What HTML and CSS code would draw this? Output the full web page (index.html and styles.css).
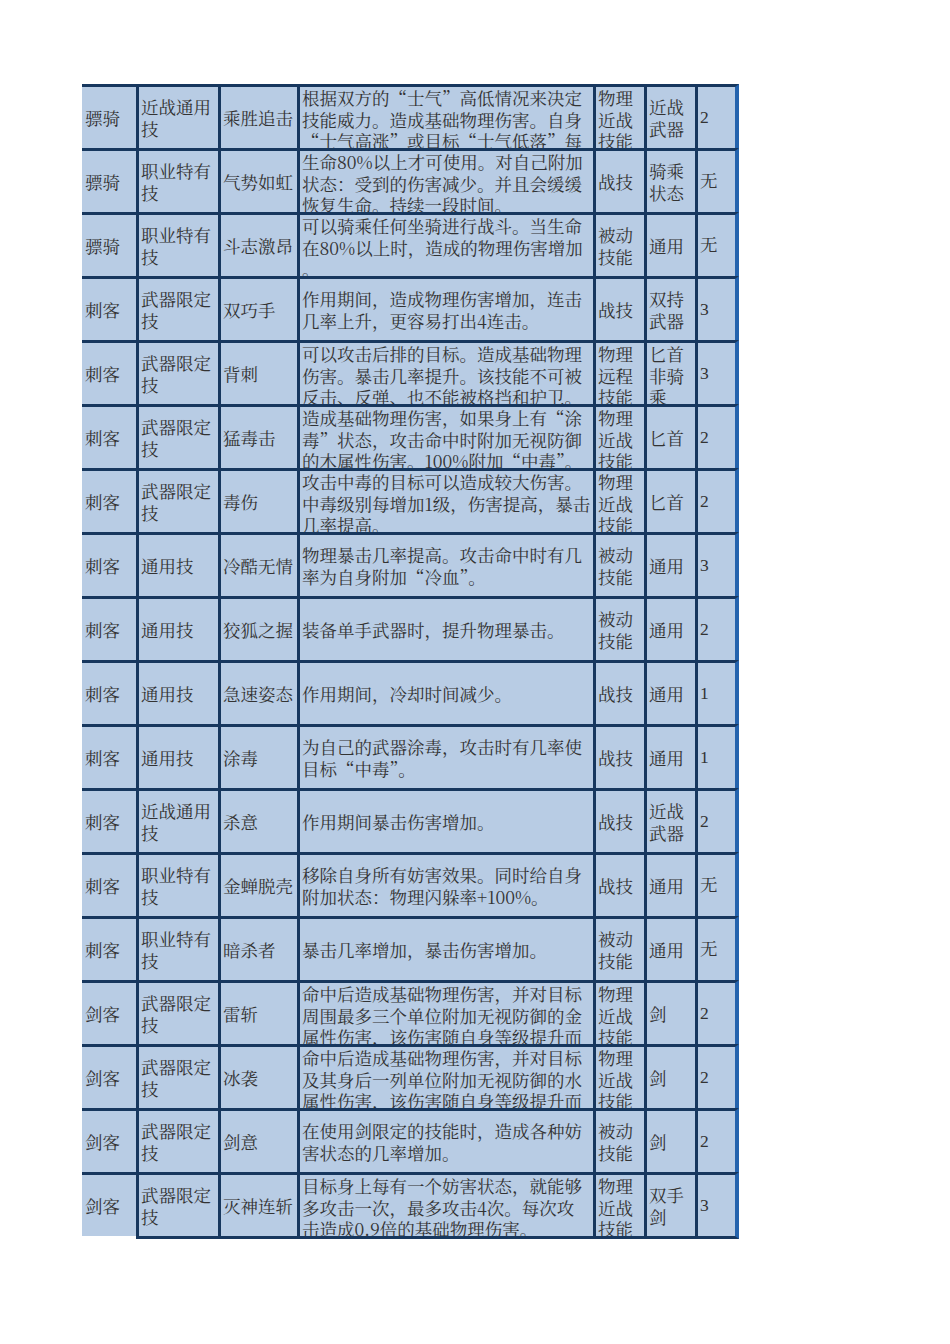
FILE: index.html
```html
<!DOCTYPE html>
<html lang="zh-CN">
<head>
<meta charset="utf-8">
<title>技能表</title>
<link rel="stylesheet" href="styles.css">
</head>
<body>
<div class="page">
  <div class="sheet">
    <div class="cell c1">骠骑</div><div class="cell">近战通用技</div><div class="cell">乘胜追击</div><div class="cell">根据双方的“士气”高低情况来决定技能威力。造成基础物理伤害。自身“士气高涨”或目标“士气低落”每一级，伤害提高。</div><div class="cell">物理近战技能</div><div class="cell">近战武器</div><div class="cell c7">2</div>
    <div class="cell c1">骠骑</div><div class="cell">职业特有技</div><div class="cell">气势如虹</div><div class="cell">生命80%以上才可使用。对自己附加状态：受到的伤害减少。并且会缓缓恢复生命。持续一段时间。</div><div class="cell">战技</div><div class="cell">骑乘状态</div><div class="cell c7">无</div>
    <div class="cell c1">骠骑</div><div class="cell">职业特有技</div><div class="cell">斗志激昂</div><div class="cell">可以骑乘任何坐骑进行战斗。当生命在80%以上时，造成的物理伤害增加。</div><div class="cell">被动技能</div><div class="cell">通用</div><div class="cell c7">无</div>
    <div class="cell c1">刺客</div><div class="cell">武器限定技</div><div class="cell">双巧手</div><div class="cell">作用期间，造成物理伤害增加，连击几率上升，更容易打出4连击。</div><div class="cell">战技</div><div class="cell">双持武器</div><div class="cell c7">3</div>
    <div class="cell c1">刺客</div><div class="cell">武器限定技</div><div class="cell">背刺</div><div class="cell">可以攻击后排的目标。造成基础物理伤害。暴击几率提升。该技能不可被反击、反弹、也不能被格挡和护卫。</div><div class="cell">物理远程技能</div><div class="cell">匕首非骑乘</div><div class="cell c7">3</div>
    <div class="cell c1">刺客</div><div class="cell">武器限定技</div><div class="cell">猛毒击</div><div class="cell">造成基础物理伤害，如果身上有“涂毒”状态，攻击命中时附加无视防御的木属性伤害。100%附加“中毒”。</div><div class="cell">物理近战技能</div><div class="cell">匕首</div><div class="cell c7">2</div>
    <div class="cell c1">刺客</div><div class="cell">武器限定技</div><div class="cell">毒伤</div><div class="cell">攻击中毒的目标可以造成较大伤害。中毒级别每增加1级，伤害提高，暴击几率提高。</div><div class="cell">物理近战技能</div><div class="cell">匕首</div><div class="cell c7">2</div>
    <div class="cell c1">刺客</div><div class="cell">通用技</div><div class="cell">冷酷无情</div><div class="cell">物理暴击几率提高。攻击命中时有几率为自身附加“冷血”。</div><div class="cell">被动技能</div><div class="cell">通用</div><div class="cell c7">3</div>
    <div class="cell c1">刺客</div><div class="cell">通用技</div><div class="cell">狡狐之握</div><div class="cell">装备单手武器时，提升物理暴击。</div><div class="cell">被动技能</div><div class="cell">通用</div><div class="cell c7">2</div>
    <div class="cell c1">刺客</div><div class="cell">通用技</div><div class="cell">急速姿态</div><div class="cell">作用期间，冷却时间减少。</div><div class="cell">战技</div><div class="cell">通用</div><div class="cell c7">1</div>
    <div class="cell c1">刺客</div><div class="cell">通用技</div><div class="cell">涂毒</div><div class="cell">为自己的武器涂毒，攻击时有几率使目标“中毒”。</div><div class="cell">战技</div><div class="cell">通用</div><div class="cell c7">1</div>
    <div class="cell c1">刺客</div><div class="cell">近战通用技</div><div class="cell">杀意</div><div class="cell">作用期间暴击伤害增加。</div><div class="cell">战技</div><div class="cell">近战武器</div><div class="cell c7">2</div>
    <div class="cell c1">刺客</div><div class="cell">职业特有技</div><div class="cell">金蝉脱壳</div><div class="cell">移除自身所有妨害效果。同时给自身附加状态：物理闪躲率+100%。</div><div class="cell">战技</div><div class="cell">通用</div><div class="cell c7">无</div>
    <div class="cell c1">刺客</div><div class="cell">职业特有技</div><div class="cell">暗杀者</div><div class="cell">暴击几率增加，暴击伤害增加。</div><div class="cell">被动技能</div><div class="cell">通用</div><div class="cell c7">无</div>
    <div class="cell c1">剑客</div><div class="cell">武器限定技</div><div class="cell">雷斩</div><div class="cell">命中后造成基础物理伤害，并对目标周围最多三个单位附加无视防御的金属性伤害，该伤害随自身等级提升而提升。</div><div class="cell">物理近战技能</div><div class="cell">剑</div><div class="cell c7">2</div>
    <div class="cell c1">剑客</div><div class="cell">武器限定技</div><div class="cell">冰袭</div><div class="cell">命中后造成基础物理伤害，并对目标及其身后一列单位附加无视防御的水属性伤害，该伤害随自身等级提升而提升。</div><div class="cell">物理近战技能</div><div class="cell">剑</div><div class="cell c7">2</div>
    <div class="cell c1">剑客</div><div class="cell">武器限定技</div><div class="cell">剑意</div><div class="cell">在使用剑限定的技能时，造成各种妨害状态的几率增加。</div><div class="cell">被动技能</div><div class="cell">剑</div><div class="cell c7">2</div>
    <div class="cell c1 last">剑客</div><div class="cell last">武器限定技</div><div class="cell last">灭神连斩</div><div class="cell last">目标身上每有一个妨害状态，就能够多攻击一次，最多攻击4次。每次攻击造成0.9倍的基础物理伤害。</div><div class="cell last">物理近战技能</div><div class="cell last">双手剑</div><div class="cell c7 last">3</div>
  </div>
</div>
</body>
</html>
```

FILE: styles.css
```css
html, body {
  margin: 0;
  padding: 0;
  background: #ffffff;
}

.page {
  padding: 84px 0 0 82px;
}

.sheet {
  display: grid;
  width: 657px;
  grid-template-columns: 54px 82px 79px 296px 51px 51px 44px;
  grid-template-rows: repeat(17, 64px) 67px;
  font-family: "Noto Serif CJK SC", "Noto Sans CJK SC", sans-serif;
  font-size: 17.5px;
  line-height: 21.5px;
  color: #333333;
}

.cell {
  box-sizing: border-box;
  background: #b8cce4;
  background-clip: padding-box;
  border-top: 3px solid #17375e;
  border-left: 3px solid #17375e;
  padding: 0 2px;
  overflow: hidden;
  display: flex;
  flex-direction: column;
  justify-content: safe center;
  line-break: anywhere;
}

.c1 {
  border-left: none;
  padding-left: 3px;
}

.c7 {
  border-right: 4px solid #2463ad;
  font-family: "Liberation Serif", "Noto Serif CJK SC", "Noto Sans CJK SC", serif;
}

.last {
  border-bottom: 3px solid #17375e;
}

.c1.last {
  border-bottom-color: transparent;
}
```
